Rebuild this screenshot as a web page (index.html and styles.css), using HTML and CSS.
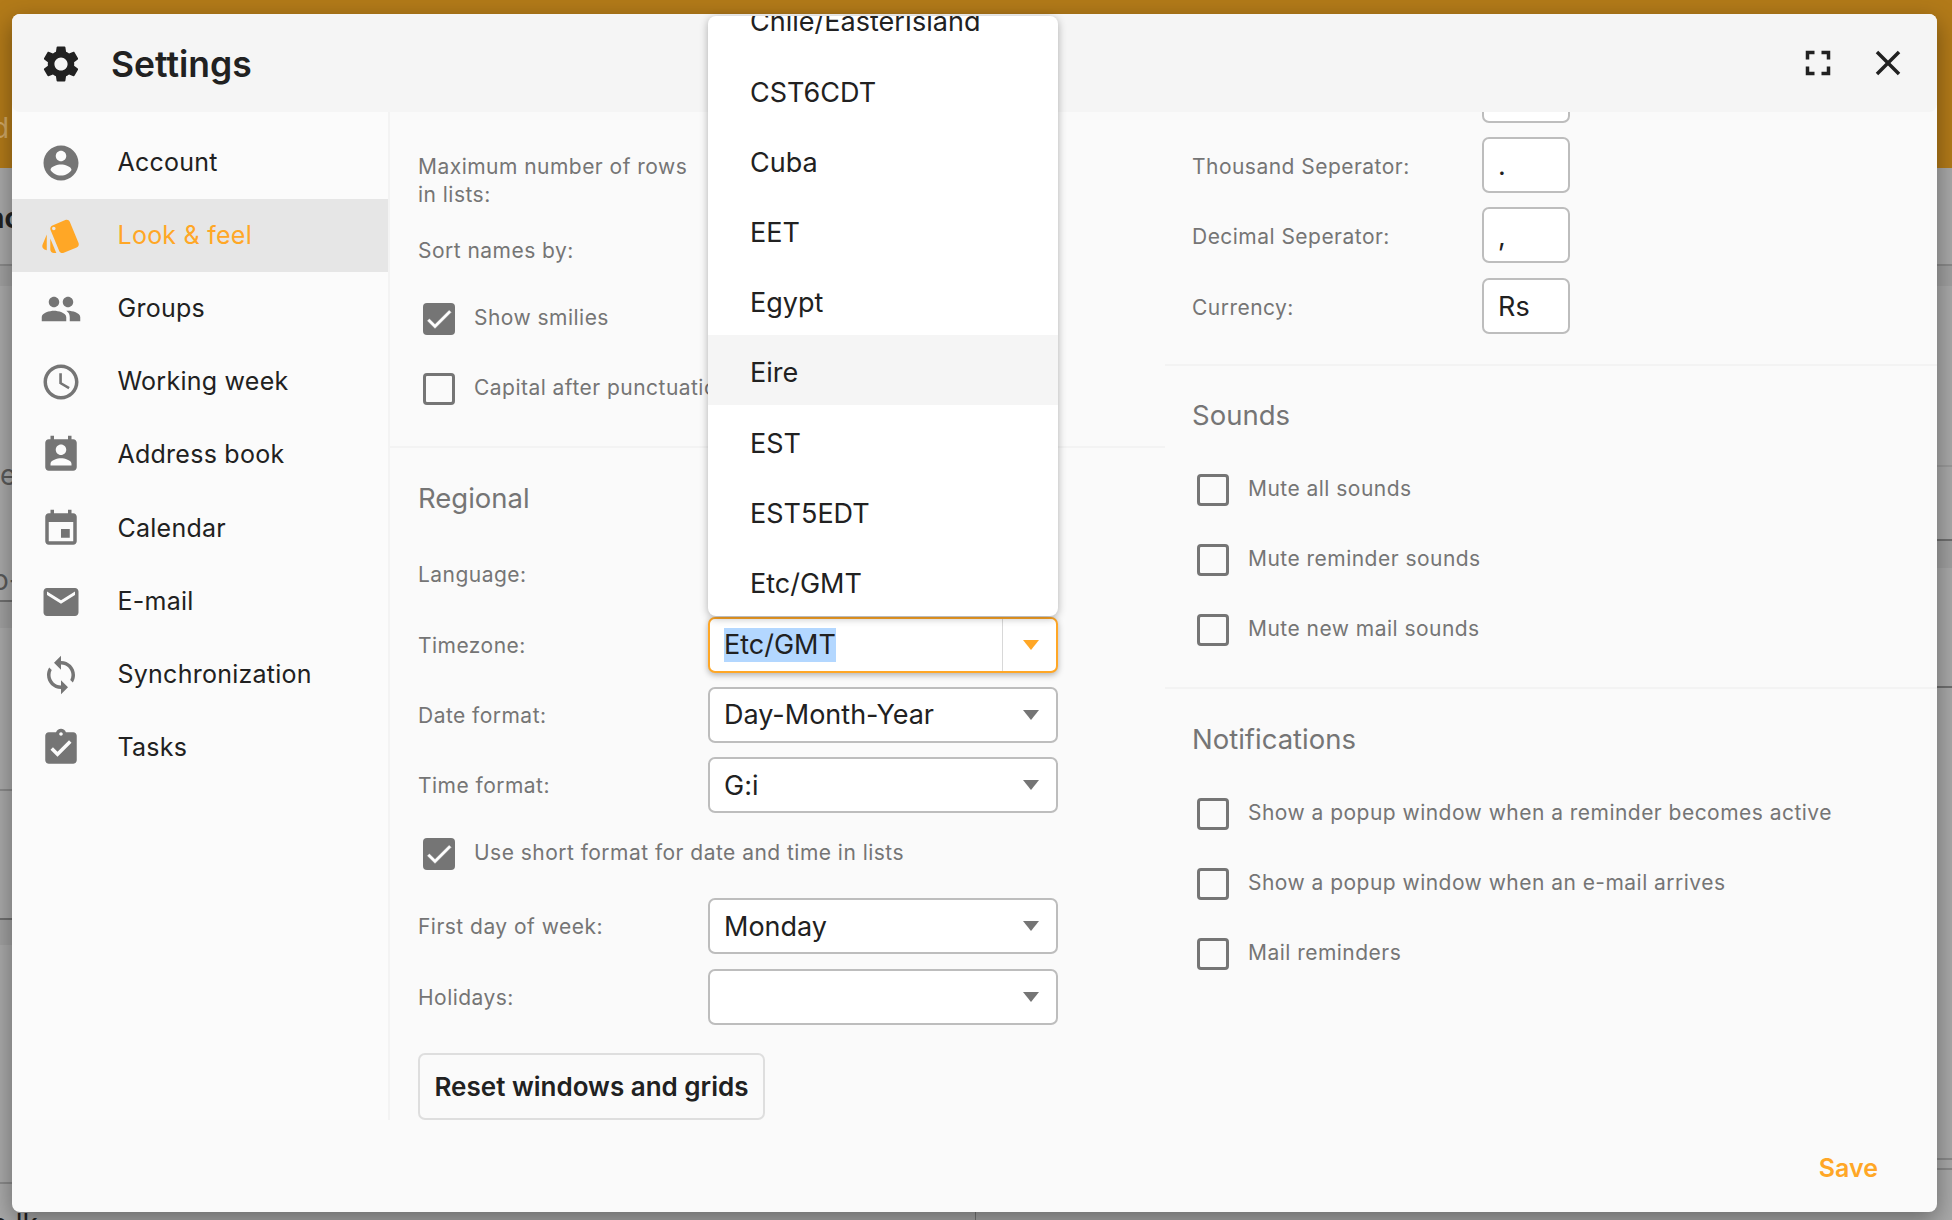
FILE: index.html
```html
<!DOCTYPE html>
<html lang="en">
<head>
<meta charset="utf-8">
<title>Settings</title>
<link rel="stylesheet" href="styles.css">
</head>
<body>
<div class="backdrop">
  <div class="band"></div>
  <div class="strip strip-l">
    <i class="shade s1"></i><i class="shade s2"></i><i class="shade s3"></i>
    <i class="line l1"></i><i class="line dark l2"></i><i class="line l3"></i><i class="line dark l4"></i><i class="line l5"></i>
  </div>
  <div class="strip strip-r">
    <i class="shade s1"></i><i class="shade s4"></i>
    <i class="line l1"></i><i class="line faint l6"></i><i class="line dark l7"></i><i class="line dark l8"></i><i class="line l9"></i><i class="line l10"></i>
  </div>
  <span class="frag frag-d">d</span>
  <span class="frag frag-nc">nc</span>
  <span class="frag frag-e">e</span>
  <span class="frag frag-o">o-</span>
  <span class="frag frag-lk">o lk</span>
  <i class="vline"></i>
</div>
<div class="dialog">
  <header class="head">
    <svg class="ic ic-gear" viewBox="0 0 24 24"><path d="M19.14 12.94c.04-.3.06-.61.06-.94 0-.32-.02-.64-.07-.94l2.03-1.58c.18-.14.23-.41.12-.61l-1.92-3.32c-.12-.22-.37-.29-.59-.22l-2.39.96c-.5-.38-1.03-.7-1.62-.94l-.36-2.54c-.04-.24-.24-.41-.48-.41h-3.84c-.24 0-.43.17-.47.41l-.36 2.54c-.59.24-1.13.57-1.62.94l-2.39-.96c-.22-.08-.47 0-.59.22L2.74 8.87c-.12.21-.08.47.12.61l2.03 1.58c-.05.3-.09.63-.09.94s.02.64.07.94l-2.03 1.58c-.18.14-.23.41-.12.61l1.92 3.32c.12.22.37.29.59.22l2.39-.96c.5.38 1.03.7 1.62.94l.36 2.54c.05.24.24.41.48.41h3.84c.24 0 .44-.17.47-.41l.36-2.54c.59-.24 1.13-.56 1.62-.94l2.39.96c.22.08.47 0 .59-.22l1.92-3.32c.12-.22.07-.47-.12-.61l-2.01-1.58zM12 15.6c-1.98 0-3.6-1.62-3.6-3.6s1.62-3.6 3.6-3.6 3.6 1.62 3.6 3.6-1.62 3.6-3.6 3.6z"/></svg>
    <h1 class="title">Settings</h1>
    <div class="head-tools">
      <svg class="ic ic-dark" viewBox="0 0 24 24"><path d="M7 14H5v5h5v-2H7v-3zm-2-4h2V7h3V5H5v5zm12 7h-3v2h5v-5h-2v3zM14 5v2h3v3h2V5h-5z"/></svg>
      <svg class="ic ic-dark" viewBox="0 0 24 24"><path d="M19 6.41L17.59 5 12 10.59 6.41 5 5 6.41 10.59 12 5 17.59 6.41 19 12 13.41 17.59 19 19 17.59 13.41 12z"/></svg>
    </div>
  </header>
  <div class="main">
    <nav class="side">
      <a class="nav"><svg class="ic" viewBox="0 0 24 24"><path d="M12 2C6.48 2 2 6.48 2 12s4.48 10 10 10 10-4.48 10-10S17.52 2 12 2zm0 3c1.66 0 3 1.34 3 3s-1.34 3-3 3-3-1.34-3-3 1.34-3 3-3zm0 14.2c-2.5 0-4.71-1.28-6-3.22.03-1.99 4-3.08 6-3.08 1.99 0 5.97 1.09 6 3.08-1.29 1.94-3.5 3.22-6 3.22z"/></svg>Account</a>
      <a class="nav nav-on"><svg class="ic" viewBox="0 0 24 24"><path d="M2.53 19.65l1.34.56v-9.03l-2.43 5.86c-.41 1.02.08 2.19 1.09 2.61zm19.5-3.7L17.07 3.98c-.31-.75-1.04-1.21-1.81-1.23-.26 0-.53.04-.79.15L7.1 5.95c-.75.31-1.21 1.03-1.23 1.8-.01.27.04.54.15.8l4.96 11.97c.31.76 1.05 1.22 1.83 1.23.26 0 .52-.05.77-.15l7.36-3.05c1.02-.42 1.51-1.59 1.09-2.6zM7.88 8.75c-.55 0-1-.45-1-1s.45-1 1-1 1 .45 1 1-.45 1-1 1zm-2 11c0 1.1.9 2 2 2h1.45l-3.45-8.34v6.34z"/></svg>Look &amp; feel</a>
      <a class="nav"><svg class="ic" viewBox="0 0 24 24"><path d="M16 11c1.66 0 2.99-1.34 2.99-3S17.66 5 16 5c-1.66 0-3 1.34-3 3s1.34 3 3 3zm-8 0c1.66 0 2.99-1.34 2.99-3S9.66 5 8 5C6.34 5 5 6.34 5 8s1.34 3 3 3zm0 2c-2.33 0-7 1.17-7 3.5V19h14v-2.5c0-2.33-4.67-3.5-7-3.5zm8 0c-.29 0-.62.02-.97.05 1.16.84 1.97 1.97 1.97 3.45V19h6v-2.5c0-2.33-4.67-3.5-7-3.5z"/></svg>Groups</a>
      <a class="nav"><svg class="ic" viewBox="0 0 24 24"><path d="M11.99 2C6.47 2 2 6.48 2 12s4.47 10 9.99 10C17.52 22 22 17.52 22 12S17.52 2 11.99 2zM12 20c-4.42 0-8-3.58-8-8s3.58-8 8-8 8 3.58 8 8-3.58 8-8 8zm.5-13H11v6l5.25 3.15.75-1.23-4.5-2.67z"/></svg>Working week</a>
      <a class="nav"><svg class="ic" viewBox="0 0 24 24"><path d="M19 3h-1V1h-2v2H8V1H6v2H5c-1.11 0-2 .9-2 2v14c0 1.1.89 2 2 2h14c1.1 0 2-.9 2-2V5c0-1.1-.9-2-2-2zm-7 3c1.66 0 3 1.34 3 3s-1.34 3-3 3-3-1.34-3-3 1.34-3 3-3zm6 12H6v-1c0-2 4-3.1 6-3.1s6 1.1 6 3.1v1z"/></svg>Address book</a>
      <a class="nav"><svg class="ic" viewBox="0 0 24 24"><path d="M17 12h-5v5h5v-5zM16 1v2H8V1H6v2H5c-1.11 0-1.99.9-1.99 2L3 19c0 1.1.89 2 2 2h14c1.1 0 2-.9 2-2V5c0-1.1-.9-2-2-2h-1V1h-2zm3 18H5V8h14v11z"/></svg>Calendar</a>
      <a class="nav"><svg class="ic" viewBox="0 0 24 24"><path d="M20 4H4c-1.1 0-1.99.9-1.99 2L2 18c0 1.1.9 2 2 2h16c1.1 0 2-.9 2-2V6c0-1.1-.9-2-2-2zm0 4l-8 5-8-5V6l8 5 8-5v2z"/></svg>E-mail</a>
      <a class="nav"><svg class="ic" viewBox="0 0 24 24"><path d="M12 4V1L8 5l4 4V6c3.31 0 6 2.69 6 6 0 1.01-.25 1.97-.7 2.8l1.46 1.46C19.54 15.03 20 13.57 20 12c0-4.42-3.58-8-8-8zm0 14c-3.31 0-6-2.69-6-6 0-1.01.25-1.97.7-2.8L5.24 7.74C4.46 8.97 4 10.43 4 12c0 4.42 3.58 8 8 8v3l4-4-4-4v3z"/></svg>Synchronization</a>
      <a class="nav"><svg class="ic" viewBox="0 0 24 24"><path d="M19 3h-4.18C14.4 1.84 13.3 1 12 1c-1.3 0-2.4.84-2.82 2H5c-1.1 0-2 .9-2 2v14c0 1.1.9 2 2 2h14c1.1 0 2-.9 2-2V5c0-1.1-.9-2-2-2zm-7 0c.55 0 1 .45 1 1s-.45 1-1 1-1-.45-1-1 .45-1 1-1zm-2 14l-4-4 1.41-1.41L10 14.17l6.59-6.59L18 9l-8 8z"/></svg>Tasks</a>
    </nav>
    <div class="col col-left">
      <section class="sec sec-first">
        <div class="row"><label class="lab">Maximum number of rows in lists:</label><div class="inp inp-wide">20</div></div>
        <div class="row"><label class="lab">Sort names by:</label><div class="inp inp-wide">First name<i class="tri"></i></div></div>
        <div class="row"><span class="box box-on"><svg viewBox="0 0 24 24"><path d="M9 16.2L4.8 12l-1.4 1.4L9 19 21 7l-1.4-1.4z"/></svg></span><span class="chk">Show smilies</span></div>
        <div class="row"><span class="box"></span><span class="chk">Capital after punctuation</span></div>
      </section>
      <section class="sec sec-reg">
        <h2 class="sec-title">Regional</h2>
        <div class="row"><label class="lab">Language:</label><div class="inp inp-wide">English<i class="tri"></i></div></div>
        <div class="row"><label class="lab">Timezone:</label><div class="inp inp-wide inp-focus"><span class="sel">Etc/GMT</span><span class="trig"><i class="tri tri-on"></i></span></div></div>
        <div class="row"><label class="lab">Date format:</label><div class="inp inp-wide">Day-Month-Year<i class="tri"></i></div></div>
        <div class="row"><label class="lab">Time format:</label><div class="inp inp-wide">G:i<i class="tri"></i></div></div>
        <div class="row"><span class="box box-on"><svg viewBox="0 0 24 24"><path d="M9 16.2L4.8 12l-1.4 1.4L9 19 21 7l-1.4-1.4z"/></svg></span><span class="chk">Use short format for date and time in lists</span></div>
        <div class="row"><label class="lab">First day of week:</label><div class="inp inp-wide">Monday<i class="tri"></i></div></div>
        <div class="row"><label class="lab">Holidays:</label><div class="inp inp-wide"><i class="tri"></i></div></div>
        <button class="btn">Reset windows and grids</button>
      </section>
    </div>
    <div class="col col-right">
      <section class="sec sec-num">
        <div class="row"><label class="lab lab-r"></label><div class="inp inp-small"></div></div>
        <div class="row"><label class="lab lab-r">Thousand Seperator:</label><div class="inp inp-small">.</div></div>
        <div class="row"><label class="lab lab-r">Decimal Seperator:</label><div class="inp inp-small">,</div></div>
        <div class="row"><label class="lab lab-r">Currency:</label><div class="inp inp-small">Rs</div></div>
      </section>
      <section class="sec sec-r">
        <h2 class="sec-title">Sounds</h2>
        <div class="row"><span class="box"></span><span class="chk">Mute all sounds</span></div>
        <div class="row"><span class="box"></span><span class="chk">Mute reminder sounds</span></div>
        <div class="row"><span class="box"></span><span class="chk">Mute new mail sounds</span></div>
      </section>
      <section class="sec sec-r sec-end">
        <h2 class="sec-title">Notifications</h2>
        <div class="row"><span class="box"></span><span class="chk">Show a popup window when a reminder becomes active</span></div>
        <div class="row"><span class="box"></span><span class="chk">Show a popup window when an e-mail arrives</span></div>
        <div class="row"><span class="box"></span><span class="chk">Mail reminders</span></div>
      </section>
    </div>
  </div>
  <footer class="foot"><span class="save">Save</span></footer>
  <ul class="menu">
    <li>Chile/EasterIsland</li>
    <li>CST6CDT</li>
    <li>Cuba</li>
    <li>EET</li>
    <li>Egypt</li>
    <li class="hover">Eire</li>
    <li>EST</li>
    <li>EST5EDT</li>
    <li>Etc/GMT</li>
  </ul>
</div>
</body>
</html>
```

FILE: styles.css
```css
* { box-sizing: border-box; }
html, body { margin: 0; height: 100%; }
body {
  position: relative;
  width: 1952px;
  height: 1220px;
  overflow: hidden;
  padding: 14px 15px 8px 12px;
  font-family: Inter, "Noto Sans", sans-serif;
  color: #212121;
  background: #a9a9a9;
}
.backdrop { position: absolute; inset: 0; overflow: hidden; }
.band { height: 168px; background: #b27a19; }
.frag { position: absolute; font-size: 28px; color: #5a5a5a; line-height: 34px; }
.frag-d { left: -8px; top: 111px; color: #d0a866; }
.frag-nc { left: -13px; top: 201px; font-weight: 700; color: #222; }
.frag-e { left: 0; top: 458px; }
.frag-o { left: -8px; top: 563px; }
.frag-lk { left: -9px; top: 1207px; color: #222; }
.vline { position: absolute; left: 975px; top: 1205px; bottom: 0; width: 1px; background: #777; }

.strip { position: absolute; top: 0; bottom: 0; }
.strip-l { left: 0; width: 12px; }
.strip-r { left: 1937px; right: 0; }
.line { position: absolute; left: 0; right: 0; height: 2px; background: #8a8a8a; }
.dark { background: #6f6f6f; }
.faint { background: #9a9a9a; }
.shade { position: absolute; left: 0; right: 0; background: rgba(0, 0, 0, .05); }
.s1 { top: 265px; height: 21px; }
.s2 { top: 601px; height: 27px; }
.s3 { top: 919px; height: 26px; }
.s4 { top: 540px; height: 28px; }
.l1 { top: 264px; }
.l2 { top: 600px; }
.l3 { top: 789px; }
.l4 { top: 918px; }
.l5 { top: 1182px; }
.l6 { top: 465px; }
.l7 { top: 539px; }
.l8 { top: 686px; }
.l9 { top: 1158px; }
.l10 { top: 1168px; }

.dialog {
  position: relative;
  height: 1198px;
  display: flex;
  flex-direction: column;
  background: #fafafa;
  border-radius: 8px;
  box-shadow: 0 8px 24px rgba(0, 0, 0, .38);
}
.head {
  flex: 0 0 98px;
  display: flex;
  align-items: center;
  position: relative;
  z-index: 1;
  padding: 2px 28px 0 28px;
  background: #f5f5f5;
  border-radius: 8px;
}
.ic { width: 42px; height: 42px; flex: none; fill: #757575; }
.ic-gear { width: 44px; height: 44px; fill: #212121; margin-left: -1px; }
.ic-dark { fill: #212121; margin-top: -2px; }
.title { margin: 2px 0 0 28px; font-size: 35.5px; font-weight: 600; line-height: 1.2; }
.head-tools { margin-left: auto; display: flex; gap: 28px; }

.main { flex: 0 0 1008px; display: flex; overflow: hidden; }
.side {
  flex: 0 0 378px;
  padding-top: 14px;
  background: #fbfbfb;
  border-right: 2px solid #f3f3f3;
}
.nav {
  display: flex;
  align-items: center;
  gap: 35.5px;
  height: 73.2px;
  padding: 0 0 2px 28px;
  font-size: 25px;
  letter-spacing: .25px;
  color: #212121;
}
.nav .ic { margin-top: 2px; }
.nav-on { background: #e6e6e6; color: #ffa726; }
.nav-on .ic { fill: #ffa726; }

.col { display: flex; flex-direction: column; }
.col-left { flex: 0 0 775px; }
.col-right { flex: 1; margin-top: -45.5px; }
.sec { padding: 23px 0 0 28px; }
.sec-first { padding: 40px 0 12px 28px; border-bottom: 2px solid #f3f3f3; }
.sec-reg { padding-top: 22px; }
.sec-reg .sec-title { margin-bottom: 20.6px; }
.sec-num { padding: 0 0 15.5px 27px; border-bottom: 2px solid #f3f3f3; }
.sec-r { padding: 21px 0 13px 27px; border-bottom: 2px solid #f3f3f3; }
.sec-r .sec-title { margin-bottom: 21px; }
.sec-end { padding-top: 22px; border-bottom: 0; }
.sec-title {
  margin: 0 0 20px;
  height: 56px;
  display: flex;
  align-items: center;
  font-size: 27.5px;
  font-weight: 400;
  color: #757575;
}
.row { display: flex; align-items: center; height: 56px; margin-bottom: 14.4px; }
.sec-r .row { margin-bottom: 14px; }
.lab { flex: 0 0 290px; padding: 2px 10px 0 0; font-size: 21px; line-height: 28px; color: #757575; letter-spacing: .47px; }
.lab-r { padding-top: 4px; }
.inp {
  position: relative;
  display: flex;
  align-items: center;
  height: 56px;
  padding: 0 14px;
  font-size: 27px;
  color: #212121;
  background: #fff;
  border: 2px solid #bdbdbd;
  border-radius: 7px;
}
.inp-wide { width: 350px; }
.inp-small { width: 88px; padding: 2px 14px 0; }
.inp-focus { border-color: #ffa726; box-shadow: 0 2px 6px rgba(0, 0, 0, .3); }
.sel { background: #b3d7ff; line-height: 34px; }
.tri {
  position: absolute;
  right: 17px;
  top: 21px;
  border-style: solid;
  border-width: 10px 8.5px 0;
  border-color: #757575 transparent transparent;
}
.trig { position: absolute; right: 0; top: 0; bottom: 0; width: 54px; border-left: 1px solid #d8d8d8; }
.tri-on { border-top-color: #ffa726; }
.box {
  flex: none;
  width: 32px;
  height: 32px;
  margin: 0 19px 4px 5px;
  border: 3px solid #757575;
  border-radius: 4px;
}
.box-on { background: #757575; border: 0; }
.box-on svg { display: block; width: 32px; height: 32px; fill: #fff; stroke: #fff; stroke-width: .4px; }
.chk { font-size: 21px; line-height: 28px; color: #757575; padding-bottom: 6px; letter-spacing: .47px; white-space: nowrap; }
.btn {
  display: block;
  width: 347px;
  height: 67px;
  margin-top: 28.4px;
  padding: 0;
  font: 600 26px Inter, "Noto Sans", sans-serif;
  color: #212121;
  background: #fafafa;
  border: 2px solid #dedede;
  border-radius: 7px;
}
.foot { flex: 1; display: flex; justify-content: flex-end; align-items: center; padding: 4px 59px 0 0; }
.save { font-size: 25px; font-weight: 600; color: #ffa726; }

.menu {
  position: absolute;
  left: 696px;
  top: 2px;
  width: 350px;
  height: 600px;
  margin: 0;
  padding: 0;
  list-style: none;
  z-index: 2;
  display: flex;
  flex-direction: column;
  justify-content: flex-end;
  overflow: hidden;
  background: #fff;
  border-radius: 8px;
  box-shadow: 0 2px 8px rgba(0, 0, 0, .3);
}
.menu li {
  flex: 0 0 70.2px;
  display: flex;
  align-items: center;
  padding: 5px 0 0 42px;
  font-size: 27px;
}
.menu .hover { background: #f5f5f5; }
```
